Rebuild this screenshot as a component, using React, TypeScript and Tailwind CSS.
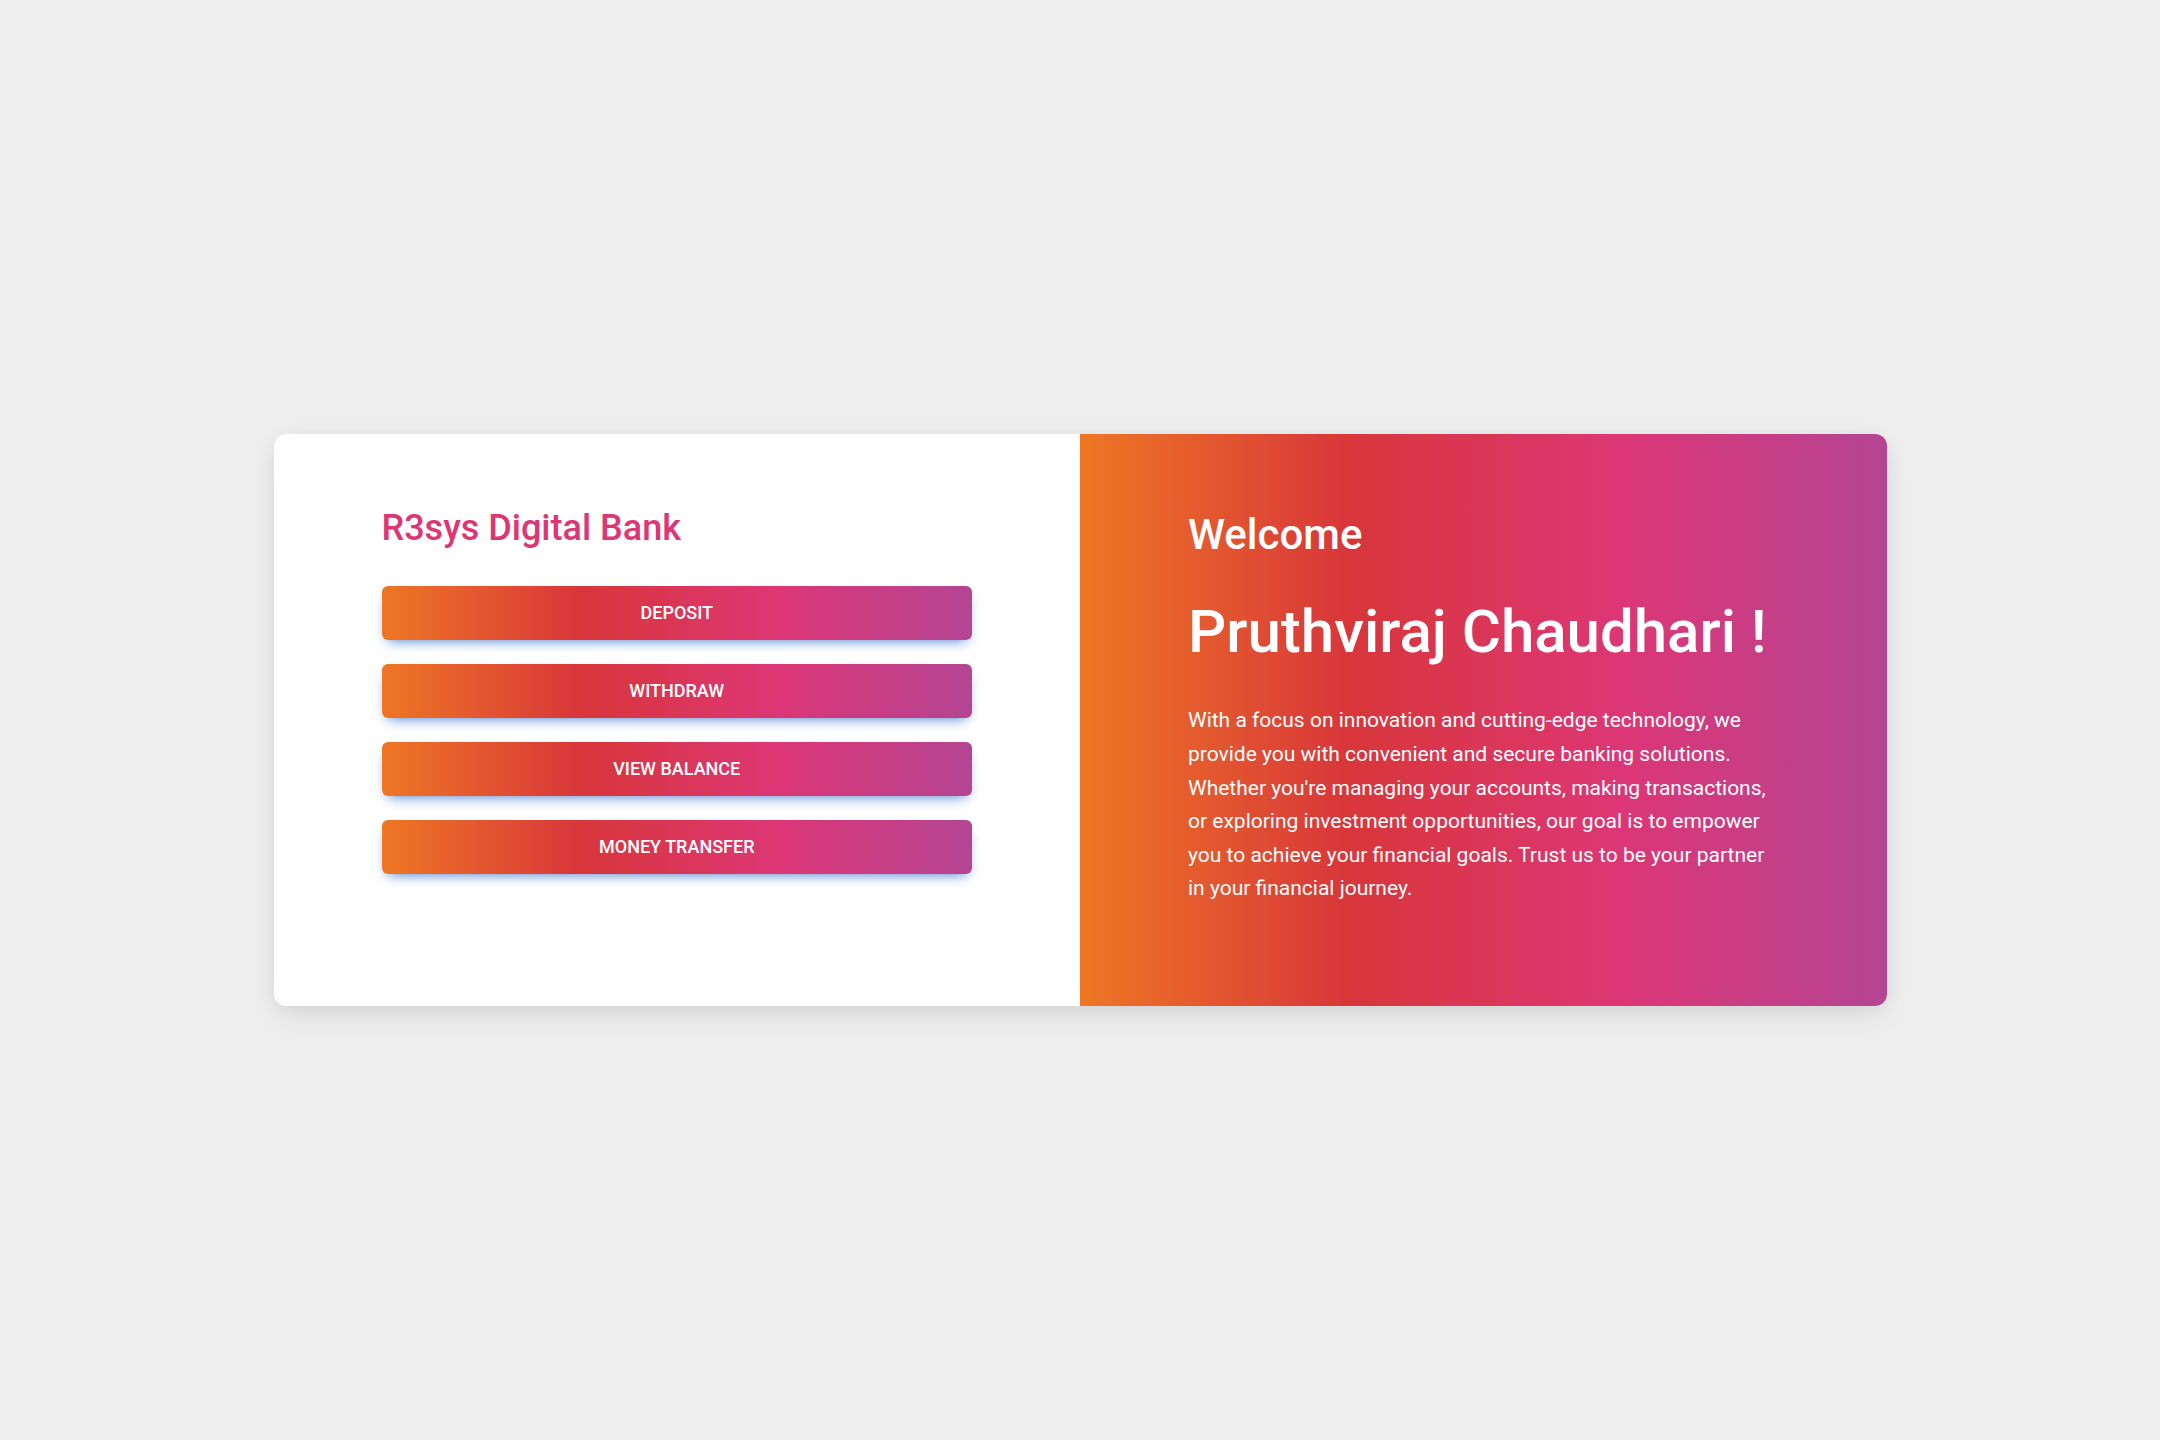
import React from "react";

const grad = "bg-[linear-gradient(to_right,#ee7724,#d8363a,#dd3675,#b44593)]";

function ActionButton({ label }: { label: string }) {
  return (
    <button
      type="button"
      className={`${grad} h-[54px] w-full rounded-[6px] text-white text-[18px] font-medium uppercase leading-none tracking-normal shadow-[0_6px_14px_-6px_#3b71ca]`}
    >
      {label}
    </button>
  );
}

export default function App() {
  return (
    <div
      className="min-h-[1440px] w-full bg-[#eeeeee] flex items-center justify-center"
      style={{ fontFamily: "Roboto, 'Noto Sans', Arial, sans-serif" }}
    >
      <div className="w-[1613px] h-[572px] flex rounded-[12px] bg-white shadow-[0_3px_22px_-4px_rgba(0,0,0,0.10),0_15px_30px_-3px_rgba(0,0,0,0.06)]">
        <div className="w-1/2 pt-[73px] px-[108px]">
          <h4 className="text-[36px] leading-[1.2] font-medium text-[#dd3675]">R3sys Digital Bank</h4>
          <div className="mt-[36px] flex flex-col gap-[24px]">
            <ActionButton label="Deposit" />
            <ActionButton label="Withdraw" />
            <ActionButton label="View Balance" />
            <ActionButton label="Money Transfer" />
          </div>
        </div>
        <div className={`${grad} w-1/2 rounded-r-[12px] pt-[76px] px-[108px] text-white`}>
          <h3 className="text-[42px] leading-[1.2] font-medium">Welcome</h3>
          <h1 className="mt-[36px] text-[60px] leading-[1.2] font-medium">Pruthviraj Chaudhari !</h1>
          <p className="mt-[36px] text-[21px] leading-[1.6]">
            With a focus on innovation and cutting-edge technology, we provide you with convenient and secure
            banking solutions. Whether you're managing your accounts, making transactions, or exploring investment
            opportunities, our goal is to empower you to achieve your financial goals. Trust us to be your partner
            in your financial journey.
          </p>
        </div>
      </div>
    </div>
  );
}
